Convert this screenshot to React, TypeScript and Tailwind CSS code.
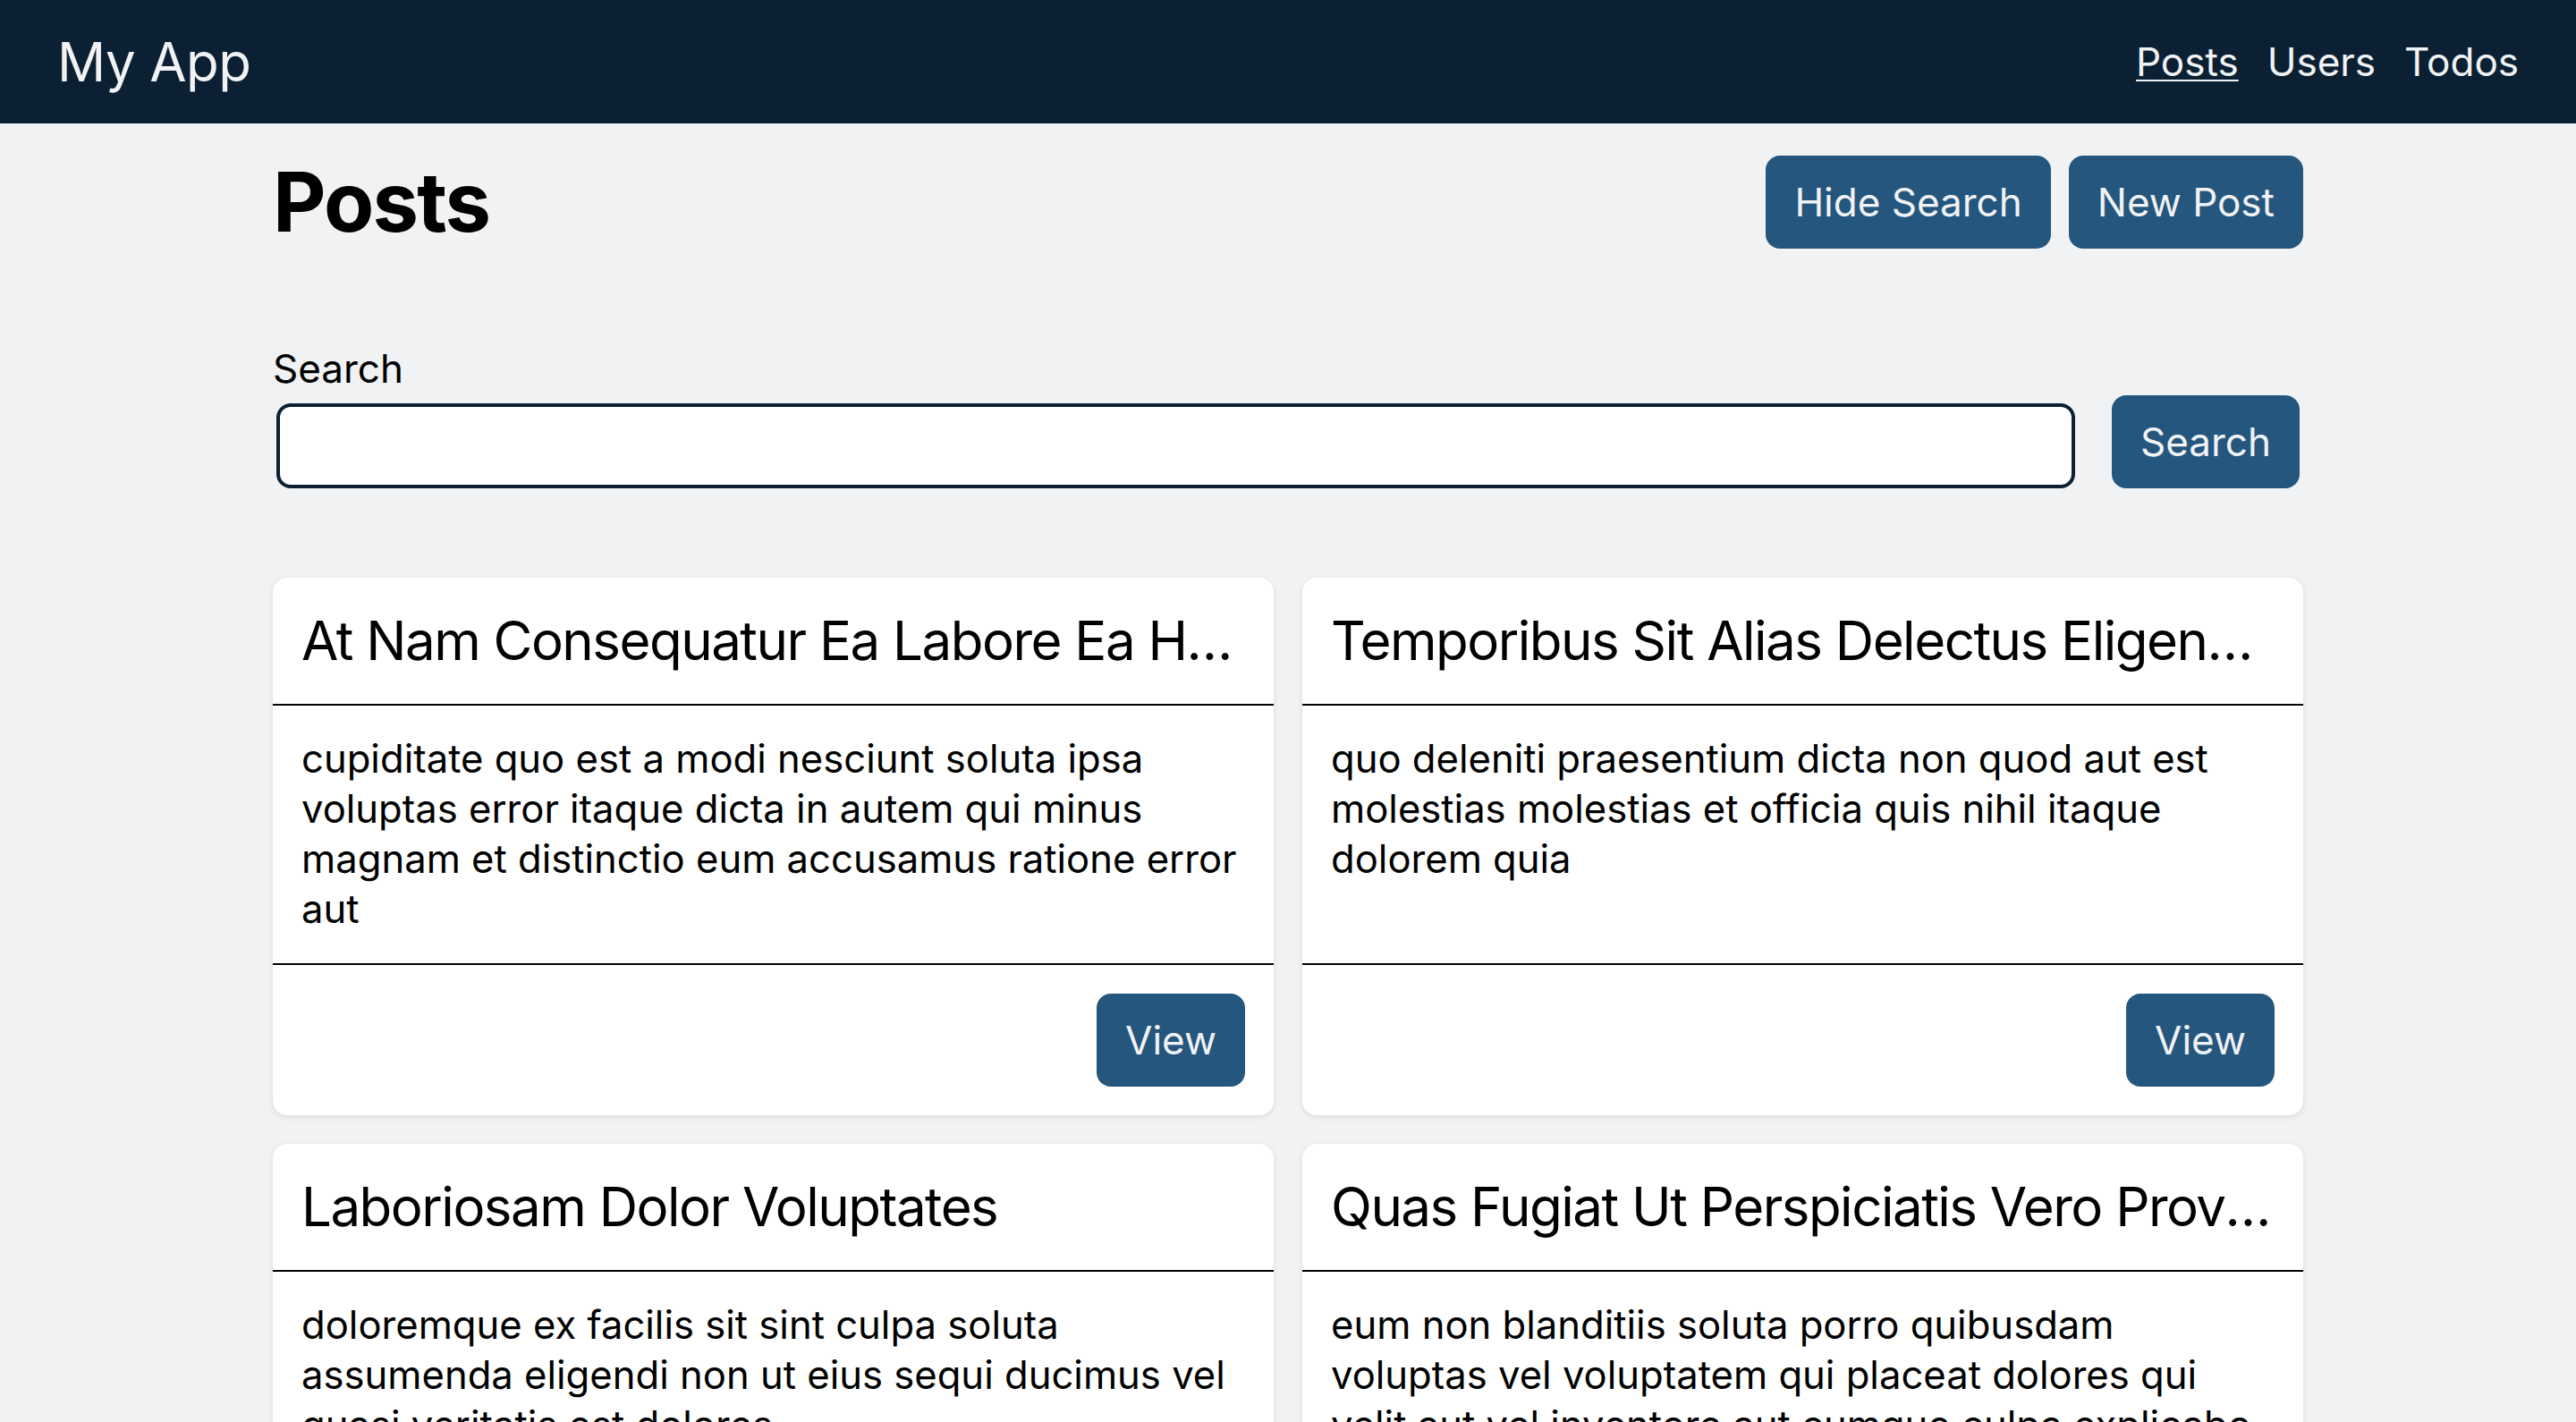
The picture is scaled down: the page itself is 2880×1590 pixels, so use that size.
const posts = [
  {
    id: 100,
    title: "at nam consequatur ea labore ea harum",
    body: "cupiditate quo est a modi nesciunt soluta ipsa voluptas error itaque dicta in autem qui minus magnam et distinctio eum accusamus ratione error aut",
  },
  {
    id: 99,
    title: "temporibus sit alias delectus eligendi possimus magni",
    body: "quo deleniti praesentium dicta non quod aut est molestias molestias et officia quis nihil itaque dolorem quia",
  },
  {
    id: 98,
    title: "laboriosam dolor voluptates",
    body: "doloremque ex facilis sit sint culpa soluta assumenda eligendi non ut eius sequi ducimus vel quasi veritatis est dolores",
  },
  {
    id: 97,
    title: "quas fugiat ut perspiciatis vero provident",
    body: "eum non blanditiis soluta porro quibusdam voluptas vel voluptatem qui placeat dolores qui velit aut vel inventore aut cumque culpa explicabo aliquid at perspiciatis est et voluptatem dignissimos dolor itaque sit nam",
  },
];

function PostCard({ title, body }: { title: string; body: string }) {
  return (
    <div className="flex flex-col rounded-2xl bg-white shadow-[0_2px_6px_rgba(0,0,0,0.1)]">
      <div className="border-b-2 border-black p-8">
        <h2 className="truncate text-[60px] leading-[77px] capitalize tracking-[-0.025em]">
          {title}
        </h2>
      </div>
      <p className="flex-1 p-8 text-[43.6px] leading-[56px]">{body}</p>
      <div className="flex justify-end border-t-2 border-black p-8">
        <button className="h-[104px] rounded-2xl bg-[#24567e] px-8 text-[44px] text-[#f1f2f4]">
          View
        </button>
      </div>
    </div>
  );
}

export default function App() {
  return (
    <div className="min-h-screen bg-[#f1f2f4] font-['Inter',sans-serif] text-black">
      <header className="flex h-[138px] items-center justify-between bg-[#0b2133] px-16 text-[#f1f2f4]">
        <a href="#" className="text-[60px] tracking-[-0.01em]">
          My App
        </a>
        <nav className="flex gap-8 text-[44px]">
          <a href="#" className="underline decoration-2 underline-offset-4">
            Posts
          </a>
          <a href="#">Users</a>
          <a href="#">Todos</a>
        </nav>
      </header>

      <main className="mx-auto max-w-[2270px] pt-9">
        <div className="flex items-center justify-between">
          <h1 className="text-[92px] font-bold leading-none tracking-[-0.02em]">Posts</h1>
          <div className="flex gap-5">
            <button className="h-[104px] rounded-2xl bg-[#24567e] px-8 text-[44px] text-[#f1f2f4]">
              Hide Search
            </button>
            <button className="h-[104px] rounded-2xl bg-[#24567e] px-8 text-[44px] text-[#f1f2f4]">
              New Post
            </button>
          </div>
        </div>

        {/* Search form */}
        <form className="mt-[104px]">
          <label className="block text-[44px] leading-[60px]">Search</label>
          <div className="flex items-end gap-[41px] px-1">
            <input className="h-[95px] flex-1 rounded-2xl border-4 border-[#0b2133] bg-white px-6 text-[40px] outline-none" />
            <button
              type="button"
              className="h-[104px] rounded-2xl bg-[#24567e] px-8 text-[44px] text-[#f1f2f4]"
            >
              Search
            </button>
          </div>
        </form>

        <div className="mt-[100px] grid grid-cols-2 gap-8">
          {posts.map((p) => (
            <PostCard key={p.id} title={p.title} body={p.body} />
          ))}
        </div>
      </main>
    </div>
  );
}
